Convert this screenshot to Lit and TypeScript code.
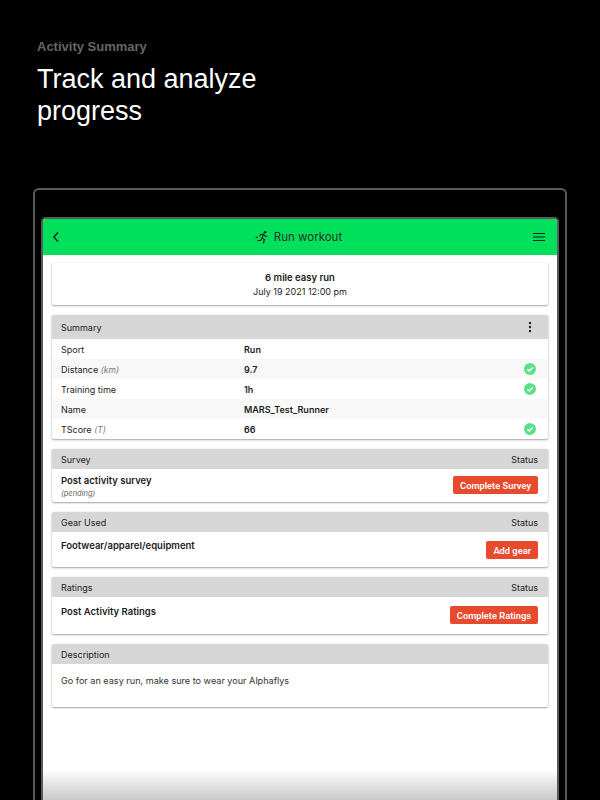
import { LitElement, html, css } from "lit";
import { customElement } from "lit/decorators.js";

const check = html`<svg class="check" viewBox="0 0 12 12" aria-hidden="true"><circle cx="6" cy="6" r="6" fill="#5fe088"/><path d="M3.4 6.2 5.2 8 8.7 4.5" fill="none" stroke="#fff" stroke-width="1.5"/></svg>`;

const rows: { label: string; unit?: string; value: string; ok: boolean }[] = [
  { label: "Sport", value: "Run", ok: false },
  { label: "Distance", unit: "(km)", value: "9.7", ok: true },
  { label: "Training time", value: "1h", ok: true },
  { label: "Name", value: "MARS_Test_Runner", ok: false },
  { label: "TScore", unit: "(T)", value: "66", ok: true },
];

@customElement("app-root")
export class AppRoot extends LitElement {
  static styles = css`
    :host {
      display: block;
      position: relative;
      width: 600px;
      height: 800px;
      overflow: hidden;
      background: #000;
      font-family: Inter, "Liberation Sans", sans-serif;
      color: #1c1c1c;
    }
    .intro {
      padding: 40px 37px 0;
      height: 188px;
      box-sizing: border-box;
      font-family: "Liberation Sans", Arial, sans-serif;
    }
    .eyebrow {
      font-size: 13px;
      line-height: 14px;
      font-weight: 700;
      color: #666;
    }
    h1 {
      margin: 9px 0 0;
      font-size: 27px;
      line-height: 32px;
      font-weight: 400;
      color: #fff;
      width: 260px;
    }
    .frame {
      margin: 0 33px;
      height: 612px;
      box-sizing: border-box;
      border: 2px solid #5a5a5a;
      border-bottom: 0;
      border-radius: 6px 6px 0 0;
      padding: 27px 6px 0;
    }
    .screen {
      height: 100%;
      border: 2px solid #5a5a5a;
      border-bottom: 0;
      border-radius: 5px 5px 0 0;
      background: #fff;
      overflow: hidden;
    }
    .bar {
      height: 36px;
      background: #00e05a;
      display: grid;
      grid-template-columns: 1fr auto 1fr;
      align-items: center;
      padding: 0 12px 0 9px;
      color: #26332c;
    }
    .bar .menu { justify-self: end; }
    .bar-title {
      display: flex;
      align-items: center;
      gap: 5px;
      font-size: 11.5px;
    }
    .content {
      padding: 8px 9px 0;
      display: flex;
      flex-direction: column;
      gap: 10px;
    }
    .card {
      background: #fff;
      border-radius: 2px;
      box-shadow: 0 1px 2px rgba(0, 0, 0, 0.35), 0 0 2px rgba(0, 0, 0, 0.1);
      overflow: hidden;
    }
    .title-card {
      height: 42px;
      display: flex;
      flex-direction: column;
      align-items: center;
      justify-content: center;
      gap: 3px;
      font-size: 9.5px;
      line-height: 11px;
    }
    .title-card b { font-weight: 600; }
    .title-card span { font-size: 9px; }
    .head {
      height: 20px;
      background: #d6d6d6;
      display: flex;
      align-items: center;
      justify-content: space-between;
      padding: 0 10px 0 9px;
      font-size: 9px;
    }
    .head.tall { height: 24px; padding-right: 16px; }
    .row {
      height: 20px;
      display: grid;
      grid-template-columns: 183px 1fr 12px;
      align-items: center;
      padding: 0 12px 0 9px;
      font-size: 9px;
      box-sizing: border-box;
    }
    .row:nth-child(even) { background: #f8f8f8; }
    .row b { font-weight: 600; }
    .row i { color: #777; font-size: 8.5px; }
    .check { width: 12px; height: 12px; display: block; }
    .item {
      display: flex;
      justify-content: space-between;
      padding: 0 10px 0 9px;
      font-size: 9.5px;
      box-sizing: border-box;
    }
    .item b { font-weight: 600; display: block; line-height: 11px; }
    .item small {
      display: block;
      font-style: italic;
      font-size: 7.5px;
      color: #666;
      line-height: 11px;
      margin-top: 2px;
    }
    .btn {
      height: 18px;
      padding: 0 7px;
      background: #e84a2e;
      border: 0;
      border-radius: 2px;
      color: #fff;
      font: 600 9.3px Roboto, sans-serif;
      white-space: nowrap;
    }
    .survey { height: 33px; padding-top: 6px; }
    .survey .btn { margin-top: 1px; }
    .gear { height: 35px; padding-top: 8px; }
    .gear .btn { margin-top: 1px; }
    .rating { height: 37px; padding-top: 9px; }
    .rating .btn { margin-top: 0; }
    .desc {
      height: 43px;
      padding: 11px 9px 0;
      box-sizing: border-box;
      font-size: 9.1px;
      line-height: 11px;
      color: #333;
    }
    .fade {
      position: absolute;
      left: 43px;
      right: 43px;
      bottom: 0;
      height: 30px;
      background: linear-gradient(to bottom, rgba(200, 200, 200, 0), #c8c8c8);
    }
  `;

  render() {
    return html`
      <div class="intro">
        <div class="eyebrow">Activity Summary</div>
        <h1>Track and analyze progress</h1>
      </div>
      <div class="frame">
        <div class="screen">
          <div class="bar">
            <svg width="8" height="12" viewBox="0 0 8 12"><path d="M6 1.5 1.8 6 6 10.5" fill="none" stroke="#14201a" stroke-width="1.4"/></svg>
            <div class="bar-title">
              <svg width="14" height="14" viewBox="0 0 14 14" fill="none" stroke="#14201a" stroke-width="1.1"><circle cx="10" cy="2.2" r="1.3" fill="#14201a" stroke="none"/><path d="M8.5 4 7 8M8.5 4 5.5 4.5 4.5 6.5M8.5 4 9.8 6 12.5 6.5M7 8 9.5 9.5 8.3 13.3M7 8 6 10.3 2.5 10.8M.5 7.3H3"/></svg>
              <span>Run workout</span>
            </div>
            <svg class="menu" width="12" height="12" viewBox="0 0 12 12"><path d="M0 2.5h12M0 6h12M0 9.5h12" stroke="#14201a" stroke-width="1.2"/></svg>
          </div>
          <div class="content">
            <div class="card title-card">
              <b>6 mile easy run</b>
              <span>July 19 2021 12:00 pm</span>
            </div>
            <div class="card">
              <div class="head tall">
                <span>Summary</span>
                <svg width="4" height="12" viewBox="0 0 4 12"><g fill="#222"><circle cx="2" cy="2" r="1.2"/><circle cx="2" cy="6" r="1.2"/><circle cx="2" cy="10" r="1.2"/></g></svg>
              </div>
              <div>
                ${rows.map(
                  (r) => html`<div class="row">
                    <span>${r.label} ${r.unit ? html`<i>${r.unit}</i>` : ""}</span>
                    <b>${r.value}</b>
                    ${r.ok ? check : html`<span></span>`}
                  </div>`
                )}
              </div>
            </div>
            <div class="card">
              <div class="head"><span>Survey</span><span>Status</span></div>
              <div class="item survey">
                <div><b>Post activity survey</b><small>(pending)</small></div>
                <button class="btn">Complete Survey</button>
              </div>
            </div>
            <div class="card">
              <div class="head"><span>Gear Used</span><span>Status</span></div>
              <div class="item gear">
                <div><b>Footwear/apparel/equipment</b></div>
                <button class="btn">Add gear</button>
              </div>
            </div>
            <div class="card">
              <div class="head"><span>Ratings</span><span>Status</span></div>
              <div class="item rating">
                <div><b>Post Activity Ratings</b></div>
                <button class="btn">Complete Ratings</button>
              </div>
            </div>
            <div class="card">
              <div class="head"><span>Description</span></div>
              <div class="desc">Go for an easy run, make sure to wear your Alphaflys</div>
            </div>
          </div>
        </div>
      </div>
      <div class="fade"></div>
    `;
  }
}
